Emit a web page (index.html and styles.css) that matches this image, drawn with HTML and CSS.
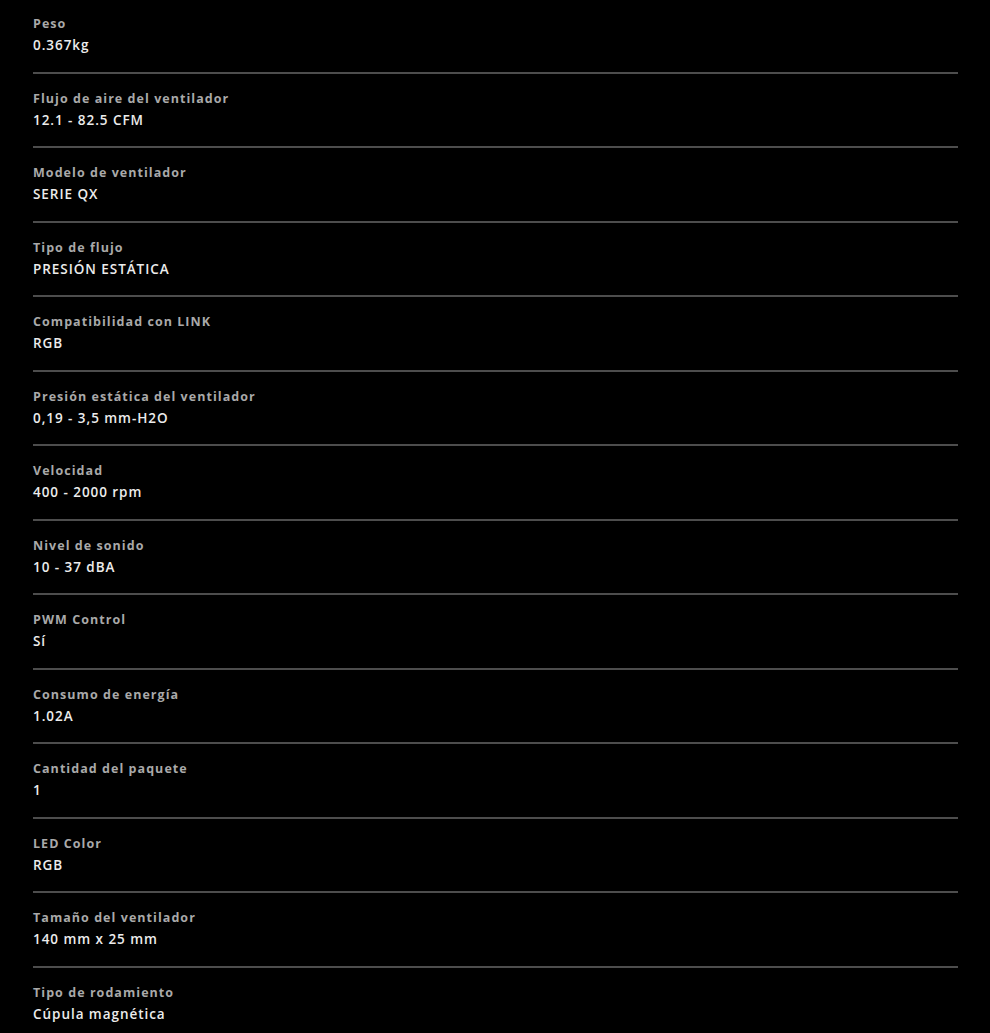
FILE: index.html
```html
<!DOCTYPE html>
<html lang="es">
<head>
<meta charset="utf-8">
<link rel="stylesheet" href="styles.css">
</head>
<body>
<ul class="specs">
  <li class="spec"><div class="label">Peso</div><div class="value">0.367kg</div></li>
  <li class="spec"><div class="label">Flujo de aire del ventilador</div><div class="value">12.1 - 82.5 CFM</div></li>
  <li class="spec"><div class="label">Modelo de ventilador</div><div class="value">SERIE QX</div></li>
  <li class="spec"><div class="label">Tipo de flujo</div><div class="value">PRESIÓN ESTÁTICA</div></li>
  <li class="spec"><div class="label">Compatibilidad con LINK</div><div class="value">RGB</div></li>
  <li class="spec"><div class="label">Presión estática del ventilador</div><div class="value">0,19 - 3,5 mm-H2O</div></li>
  <li class="spec"><div class="label">Velocidad</div><div class="value">400 - 2000 rpm</div></li>
  <li class="spec"><div class="label">Nivel de sonido</div><div class="value">10 - 37 dBA</div></li>
  <li class="spec"><div class="label">PWM Control</div><div class="value">Sí</div></li>
  <li class="spec"><div class="label">Consumo de energía</div><div class="value">1.02A</div></li>
  <li class="spec"><div class="label">Cantidad del paquete</div><div class="value">1</div></li>
  <li class="spec"><div class="label">LED Color</div><div class="value">RGB</div></li>
  <li class="spec"><div class="label">Tamaño del ventilador</div><div class="value">140 mm x 25 mm</div></li>
  <li class="spec"><div class="label">Tipo de rodamiento</div><div class="value">Cúpula magnética</div></li>
</ul>
</body>
</html>
```
FILE: styles.css
```css
html, body {
  margin: 0;
  background: #000;
}
body {
  font-family: "Open Sans", "Liberation Sans", sans-serif;
  height: 1033px;
  overflow: hidden;
}
.specs {
  list-style: none;
  margin: 0;
  padding: 0 32px 0 33px;
  width: 925px;
}
.spec {
  padding: 14px 0 15.5px;
  border-bottom: 2px solid #4d4d4d;
}
.spec:first-child {
  padding-top: 13px;
}
.label {
  color: #a9a9a9;
  font-size: 12.5px;
  font-weight: 700;
  letter-spacing: 1.05px;
  line-height: 21px;
}
.value {
  color: #ececec;
  font-size: 13.5px;
  font-weight: 600;
  letter-spacing: 0.95px;
  line-height: 22px;
}
```
